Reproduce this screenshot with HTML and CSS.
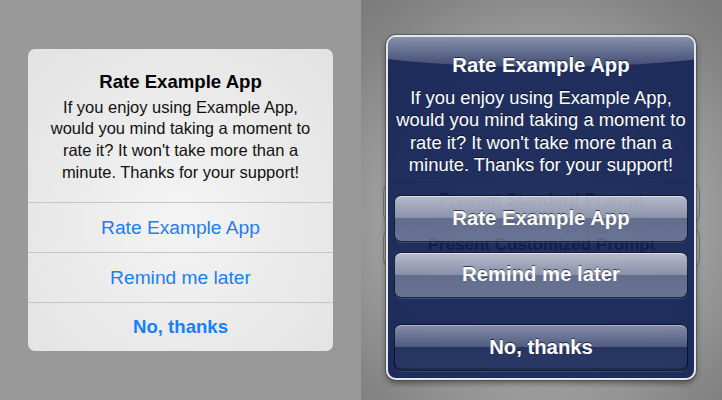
FILE: index.html
```html
<!DOCTYPE html>
<html lang="en">
<head>
  <meta charset="UTF-8">
  <meta name="viewport" content="width=device-width, initial-scale=1.0">
  <title>Rate Example App</title>
  <link rel="stylesheet" href="styles.css">
</head>
<body>

  <div class="screen">
    <section class="panel panel-flat">
      <div class="flat-alert">
        <div class="flat-body">
          <h2 class="flat-title">Rate Example App</h2>
          <p class="flat-message">If you enjoy using Example App,<br>would you mind taking a moment to<br>rate it? It won't take more than a<br>minute. Thanks for your support!</p>
        </div>
        <button class="flat-button">Rate Example App</button>
        <button class="flat-button">Remind me later</button>
        <button class="flat-button flat-cancel">No, thanks</button>
      </div>
    </section>

    <section class="panel panel-glossy">
      <div class="ghost-list">
        <div class="ghost-button">Present Standard Prompt</div>
        <div class="ghost-button">Present Customized Prompt</div>
      </div>

      <div class="glossy-alert">
        <h2 class="glossy-title">Rate Example App</h2>
        <p class="glossy-message">If you enjoy using Example App,<br>would you mind taking a moment to<br>rate it? It won't take more than a<br>minute. Thanks for your support!</p>
        <div class="glossy-buttons">
          <button class="glossy-button">Rate Example App</button>
          <button class="glossy-button">Remind me later</button>
          <button class="glossy-button glossy-cancel">No, thanks</button>
        </div>
      </div>
    </section>
  </div>

</body>
</html>
```

FILE: styles.css
```css
body {
  margin: 0;
  padding: 0;
  font-family: "Liberation Sans", Arial, sans-serif;
}
.screen {
  display: flex;
  width: 722px;
  height: 400px;
  overflow: hidden;
}
.panel {
  width: 361px;
  height: 400px;
  flex-shrink: 0;
  position: relative;
}

/* left: flat style */
.panel-flat {
  background-color: #999999;
  display: flex;
  align-items: center;
  justify-content: center;
}
.flat-alert {
  width: 305px;
  border-radius: 7px;
  overflow: hidden;
  background: radial-gradient(ellipse at 50% 55%, #f4f4f4 0%, #e9e9e9 60%, #e2e2e2 100%);
  display: flex;
  flex-direction: column;
}
.flat-body {
  padding: 22px 10px 19px;
  text-align: center;
  color: #111111;
}
.flat-title {
  margin: 0 0 4px;
  font-size: 18.6px;
  line-height: 22px;
  font-weight: bold;
  color: #000000;
}
.flat-message {
  margin: 0;
  font-size: 16.5px;
  line-height: 21.7px;
  white-space: nowrap;
}
.flat-button {
  height: 50px;
  margin: 0;
  padding: 0;
  border: none;
  border-top: 1px solid #c6c6c6;
  background: transparent;
  font-family: inherit;
  font-size: 19.2px;
  color: #1a7ef6;
  cursor: pointer;
}
.flat-cancel {
  height: 49px;
  font-weight: bold;
  font-size: 18.6px;
}

/* right: glossy style */
.panel-glossy {
  background: radial-gradient(ellipse 75% 70% at 50% 55%, #bcbcbc 0%, #a6a6a6 50%, #858585 85%, #7c7c7c 100%);
}
.ghost-list {
  display: flex;
  flex-direction: column;
  gap: 3px;
  padding: 182px 22px 0;
}
.ghost-button {
  height: 42px;
  box-sizing: border-box;
  border: 1px solid rgba(40, 40, 40, 0.35);
  border-radius: 10px;
  background-color: rgba(255, 255, 255, 0.06);
  display: flex;
  align-items: center;
  justify-content: center;
  padding-bottom: 6px;
  font-size: 17px;
  font-weight: bold;
  color: #000000;
}
.glossy-alert {
  position: absolute;
  top: 35px;
  left: 25px;
  width: 310px;
  box-sizing: border-box;
  padding: 16px 6px 7px;
  border: 2px solid #e6e7ea;
  border-radius: 10px;
  background-color: rgba(17, 33, 85, 0.9);
  box-shadow: 0 0 0 1px rgba(60, 60, 60, 0.45), 0 3px 6px rgba(0, 0, 0, 0.45);
  overflow: hidden;
  text-align: center;
  color: #ffffff;
  text-shadow: 0 -1px 0 rgba(0, 0, 0, 0.6);
}
.glossy-alert::before {
  content: '';
  position: absolute;
  left: -93px;
  top: -42px;
  width: 496px;
  height: 72px;
  border-radius: 50%;
  background: linear-gradient(rgba(255, 255, 255, 0.5) 55%, rgba(255, 255, 255, 0.14) 100%);
}
.glossy-title {
  position: relative;
  margin: 0 0 10px;
  font-size: 20.3px;
  line-height: 24px;
  font-weight: bold;
}
.glossy-message {
  position: relative;
  margin: 0 0 18px;
  font-size: 18.4px;
  line-height: 22.4px;
  white-space: nowrap;
}
.glossy-buttons {
  display: flex;
  flex-direction: column;
}
.glossy-button {
  height: 47px;
  margin: 0 0 10px;
  padding: 0;
  border: 1px solid rgba(8, 12, 30, 0.85);
  border-radius: 7px;
  background: linear-gradient(rgba(255, 255, 255, 0.68) 0%, rgba(255, 255, 255, 0.47) 50%, rgba(255, 255, 255, 0.3) 50%, rgba(255, 255, 255, 0.33) 100%);
  box-shadow: inset 0 1px 0 rgba(255, 255, 255, 0.55), 0 1px 0 rgba(255, 255, 255, 0.12);
  font-family: inherit;
  font-size: 20.3px;
  font-weight: bold;
  color: #ffffff;
  text-shadow: 0 -1px 0 rgba(0, 0, 0, 0.6);
  cursor: pointer;
}
.glossy-button:nth-child(2) {
  height: 46px;
  margin-bottom: 26px;
}
.glossy-cancel {
  margin-bottom: 0;
  background: linear-gradient(rgba(255, 255, 255, 0.46) 0%, rgba(255, 255, 255, 0.22) 48%, rgba(255, 255, 255, 0.03) 48%, rgba(255, 255, 255, 0.06) 100%);
  box-shadow: inset 0 1px 0 rgba(255, 255, 255, 0.35), inset 0 -2px 0 rgba(0, 0, 0, 0.25), 0 1px 0 rgba(255, 255, 255, 0.12);
}
```
